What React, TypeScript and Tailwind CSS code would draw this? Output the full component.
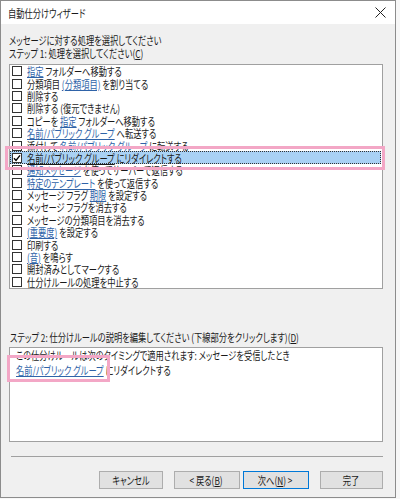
import React from "react";

type Seg = { t: string; l?: boolean };

const items: Seg[][] = [
  [{ t: "指定", l: true }, { t: " フォルダーへ移動する" }],
  [{ t: "分類項目 " }, { t: "(分類項目)", l: true }, { t: " を割り当てる" }],
  [{ t: "削除する" }],
  [{ t: "削除する (復元できません)" }],
  [{ t: "コピーを " }, { t: "指定", l: true }, { t: " フォルダーへ移動する" }],
  [{ t: "名前/パブリック グループ", l: true }, { t: " へ転送する" }],
  [{ t: "添付して " }, { t: "名前/パブリック グループ", l: true }, { t: " に転送する" }],
  [{ t: "名前/パブリック グループ", l: true }, { t: " にリダイレクトする" }],
  [{ t: "通知メッセージ", l: true }, { t: " を使ってサーバーで返信する" }],
  [{ t: "特定のテンプレート", l: true }, { t: " を使って返信する" }],
  [{ t: "メッセージ フラグ " }, { t: "期限", l: true }, { t: " を設定する" }],
  [{ t: "メッセージ フラグを消去する" }],
  [{ t: "メッセージの分類項目を消去する" }],
  [{ t: "(重要度)", l: true }, { t: " を設定する" }],
  [{ t: "印刷する" }],
  [{ t: "(音)", l: true }, { t: " を鳴らす" }],
  [{ t: "開封済みとしてマークする" }],
  [{ t: "仕分けルールの処理を中止する" }],
];

const SELECTED = 7;

function T({ children, center }: { children: React.ReactNode; center?: boolean }) {
  return (
    <span
      className={
        "inline-block whitespace-pre scale-x-[0.75] " +
        (center ? "origin-center" : "origin-left")
      }
    >
      {children}
    </span>
  );
}

function Segs({ segs, selected }: { segs: Seg[]; selected?: boolean }) {
  return (
    <T>
      {segs.map((s, i) =>
        s.l ? (
          <span
            key={i}
            className={selected ? "underline text-[#1a1a1a]" : "underline text-[#2f63a8]"}
          >
            {s.t}
          </span>
        ) : (
          <span key={i}>{s.t}</span>
        )
      )}
    </T>
  );
}

function Check({ checked }: { checked?: boolean }) {
  return (
    <span className="w-[10px] h-[10px] border border-[#333] bg-white flex items-center justify-center shrink-0">
      {checked && (
        <svg width="8" height="8" viewBox="0 0 8 8">
          <path d="M1 4.2 L3 6.4 L7 1.4" fill="none" stroke="#000" strokeWidth="1.4" />
        </svg>
      )}
    </span>
  );
}

function Btn({ children, def }: { children: React.ReactNode; def?: boolean }) {
  return (
    <div
      className={
        "w-[66px] h-[18px] flex items-center justify-center bg-[#e1e1e1] border " +
        (def ? "border-[#0078d7]" : "border-[#adadad]")
      }
    >
      <T center>{children}</T>
    </div>
  );
}

export default function App() {
  return (
    <div
      className="w-[400px] h-[499px] bg-[#f7f7f7] relative overflow-hidden text-[11px] text-[#1a1a1a] [font-feature-settings:'palt']"
      style={{ fontFamily: '"Noto Sans CJK JP", "Noto Sans", sans-serif' }}
    >
      <div className="w-[396px] h-[498px] border border-[#8c8c8c] bg-[#f0f0f0] flex flex-col">
        {/* title bar */}
        <div className="h-[23px] bg-white flex items-center justify-between pl-[7px] pr-[8px] shrink-0">
          <span className="leading-[13px] pt-[1px]">
            <T>自動仕分けウィザード</T>
          </span>
          <svg width="11" height="11" viewBox="0 0 11 11" className="mr-[1px]">
            <path d="M0.5 0.5 L10.5 10.5 M10.5 0.5 L0.5 10.5" stroke="#222" strokeWidth="1" />
          </svg>
        </div>

        <div className="flex flex-col pl-[8px] pr-[12px]">
          <div className="leading-[13px] mt-[10px] whitespace-nowrap">
            <T>メッセージに対する処理を選択してください</T>
          </div>
          <div className="leading-[13px] whitespace-nowrap">
            <T>
              ステップ 1: 処理を選択してください(<span className="underline">C</span>)
            </T>
          </div>

          {/* list box */}
          <div className="mt-[4px] w-[374px] h-[225px] bg-white border border-[#a0a0a0] flex flex-col">
            {items.map((segs, i) => {
              const sel = i === SELECTED;
              return (
                <div
                  key={i}
                  className="h-[12.4px] flex items-center pl-[2px] leading-[12px] relative whitespace-nowrap"
                >
                  {sel && (
                    <span className="absolute left-0 right-[1px] top-[-0.5px] h-[13px] bg-[#a9d1f4] border border-dotted border-[#333]" />
                  )}
                  <span className="relative flex items-center gap-[5px]">
                    <Check checked={sel} />
                    <Segs segs={segs} selected={sel} />
                  </span>
                </div>
              );
            })}
          </div>

          <div className="leading-[13px] mt-[42px] pl-[1px] whitespace-nowrap">
            <T>
              ステップ 2: 仕分けルールの説明を編集してください (下線部分をクリックします)(
              <span className="underline">D</span>)
            </T>
          </div>

          {/* description box */}
          <div className="mt-[3px] w-[374px] h-[95px] bg-white border border-[#a0a0a0] pl-[6px] flex flex-col whitespace-nowrap">
            <div className="leading-[15px]">
              <T>この仕分けルールは次のタイミングで適用されます: メッセージを受信したとき</T>
            </div>
            <div className="leading-[15px]">
              <T>
                <span className="underline text-[#2f63a8]">名前/パブリック グループ</span> にリダイレクトする
              </T>
            </div>
          </div>

          <div className="mt-[14px] ml-[2px] w-[372px] h-[1px] bg-[#a0a0a0]" />

          <div className="mt-[14px] flex gap-[11px] pl-[90px] leading-[13px]">
            <Btn>キャンセル</Btn>
            <div className="flex gap-[3px]">
              <Btn>
                &lt; 戻る(<span className="underline">B</span>)
              </Btn>
              <Btn def>
                次へ(<span className="underline">N</span>) &gt;
              </Btn>
            </div>
            <Btn>完了</Btn>
          </div>
        </div>
      </div>

      {/* annotation overlays */}
      <div className="absolute left-[5px] top-[146px] w-[380px] h-[24px] border-[3px] border-[#f3a7c6] pointer-events-none" />
      <div className="absolute left-[7px] top-[355px] w-[103px] h-[27px] border-[3px] border-[#f3a7c6] pointer-events-none" />
    </div>
  );
}
